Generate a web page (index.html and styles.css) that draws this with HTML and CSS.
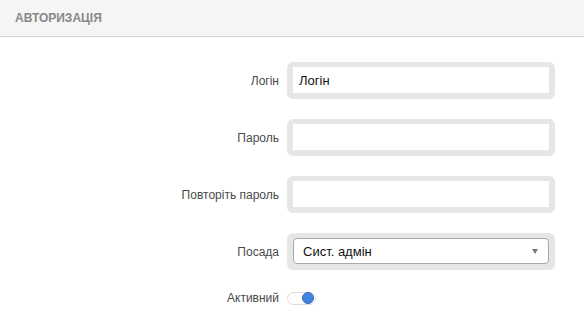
FILE: index.html
```html
<!DOCTYPE html>
<html lang="uk">
<head>
    <meta charset="UTF-8">
    <title>Авторизація</title>
    <link rel="stylesheet" href="styles.css">
</head>
<body>
    <div id="panel">
        <div class="header">
            <h2>АВТОРИЗАЦІЯ</h2>
        </div>
        <div class="body">
            <div class="row">
                <label for="txtLogin">Логін</label>
                <div class="field"><input id="txtLogin" type="text" value="Логін"></div>
            </div>
            <div class="row">
                <label for="txtPass">Пароль</label>
                <div class="field"><input id="txtPass" type="password"></div>
            </div>
            <div class="row">
                <label for="txtPass2">Повторіть пароль</label>
                <div class="field"><input id="txtPass2" type="password"></div>
            </div>
            <div class="row">
                <label for="selPost">Посада</label>
                <div class="field">
                    <div class="select" id="selPost">
                        <span>Сист. адмін</span>
                        <span class="arrow"></span>
                    </div>
                </div>
            </div>
            <div class="row short">
                <label>Активний</label>
                <div class="toggle"><span class="knob"></span></div>
            </div>
        </div>
    </div>
</body>
</html>
```
FILE: styles.css
```css
*{
    margin: 0;
    padding: 0;
    box-sizing: border-box;
    font-family: 'Liberation Sans', Arial, sans-serif;
}
body{
    background: #fff;
}
#panel .header{
    height: 37px;
    background-color: #f5f5f5;
    border-bottom: 1px solid #d4d4d4;
    padding-left: 15px;
    display: flex;
    align-items: center;
}
#panel .header h2{
    font-size: 12px;
    font-weight: bold;
    color: #888;
}
#panel .body{
    padding-top: 25px;
    display: flex;
    flex-direction: column;
    gap: 20px;
}
#panel .row{
    display: grid;
    grid-template-columns: 279px 268px;
    column-gap: 8px;
    align-items: center;
}
#panel .row label{
    text-align: right;
    font-size: 12px;
    color: #4a4a4a;
}
#panel .field{
    background: #e6e6e6;
    border-radius: 6px;
    padding: 5px 6px 6px;
}
#panel .field input{
    display: block;
    width: 100%;
    height: 26px;
    border: 0;
    background: #fff;
    padding: 0 6px;
    font-size: 13px;
    color: #111;
    outline: none;
}
#panel .select{
    height: 26px;
    background: #fff;
    border: 1px solid #a9a9a9;
    border-radius: 4px;
    display: flex;
    align-items: center;
    justify-content: space-between;
    padding: 0 10px 0 9px;
    font-size: 13px;
    color: #111;
}
#panel .select .arrow{
    width: 0;
    height: 0;
    border-left: 3.5px solid transparent;
    border-right: 3.5px solid transparent;
    border-top: 5px solid #777;
}
#panel .row.short{
    margin-top: 1px;
}
#panel .toggle{
    width: 29px;
    height: 13px;
    border: 1px solid #ddd;
    border-radius: 7px;
    background: #fff;
    display: flex;
    align-items: center;
    justify-content: flex-end;
    padding-right: 1px;
}
#panel .toggle .knob{
    width: 12px;
    height: 12px;
    border-radius: 50%;
    background: #4185de;
    border: 1px solid #2f6cc2;
}
```
